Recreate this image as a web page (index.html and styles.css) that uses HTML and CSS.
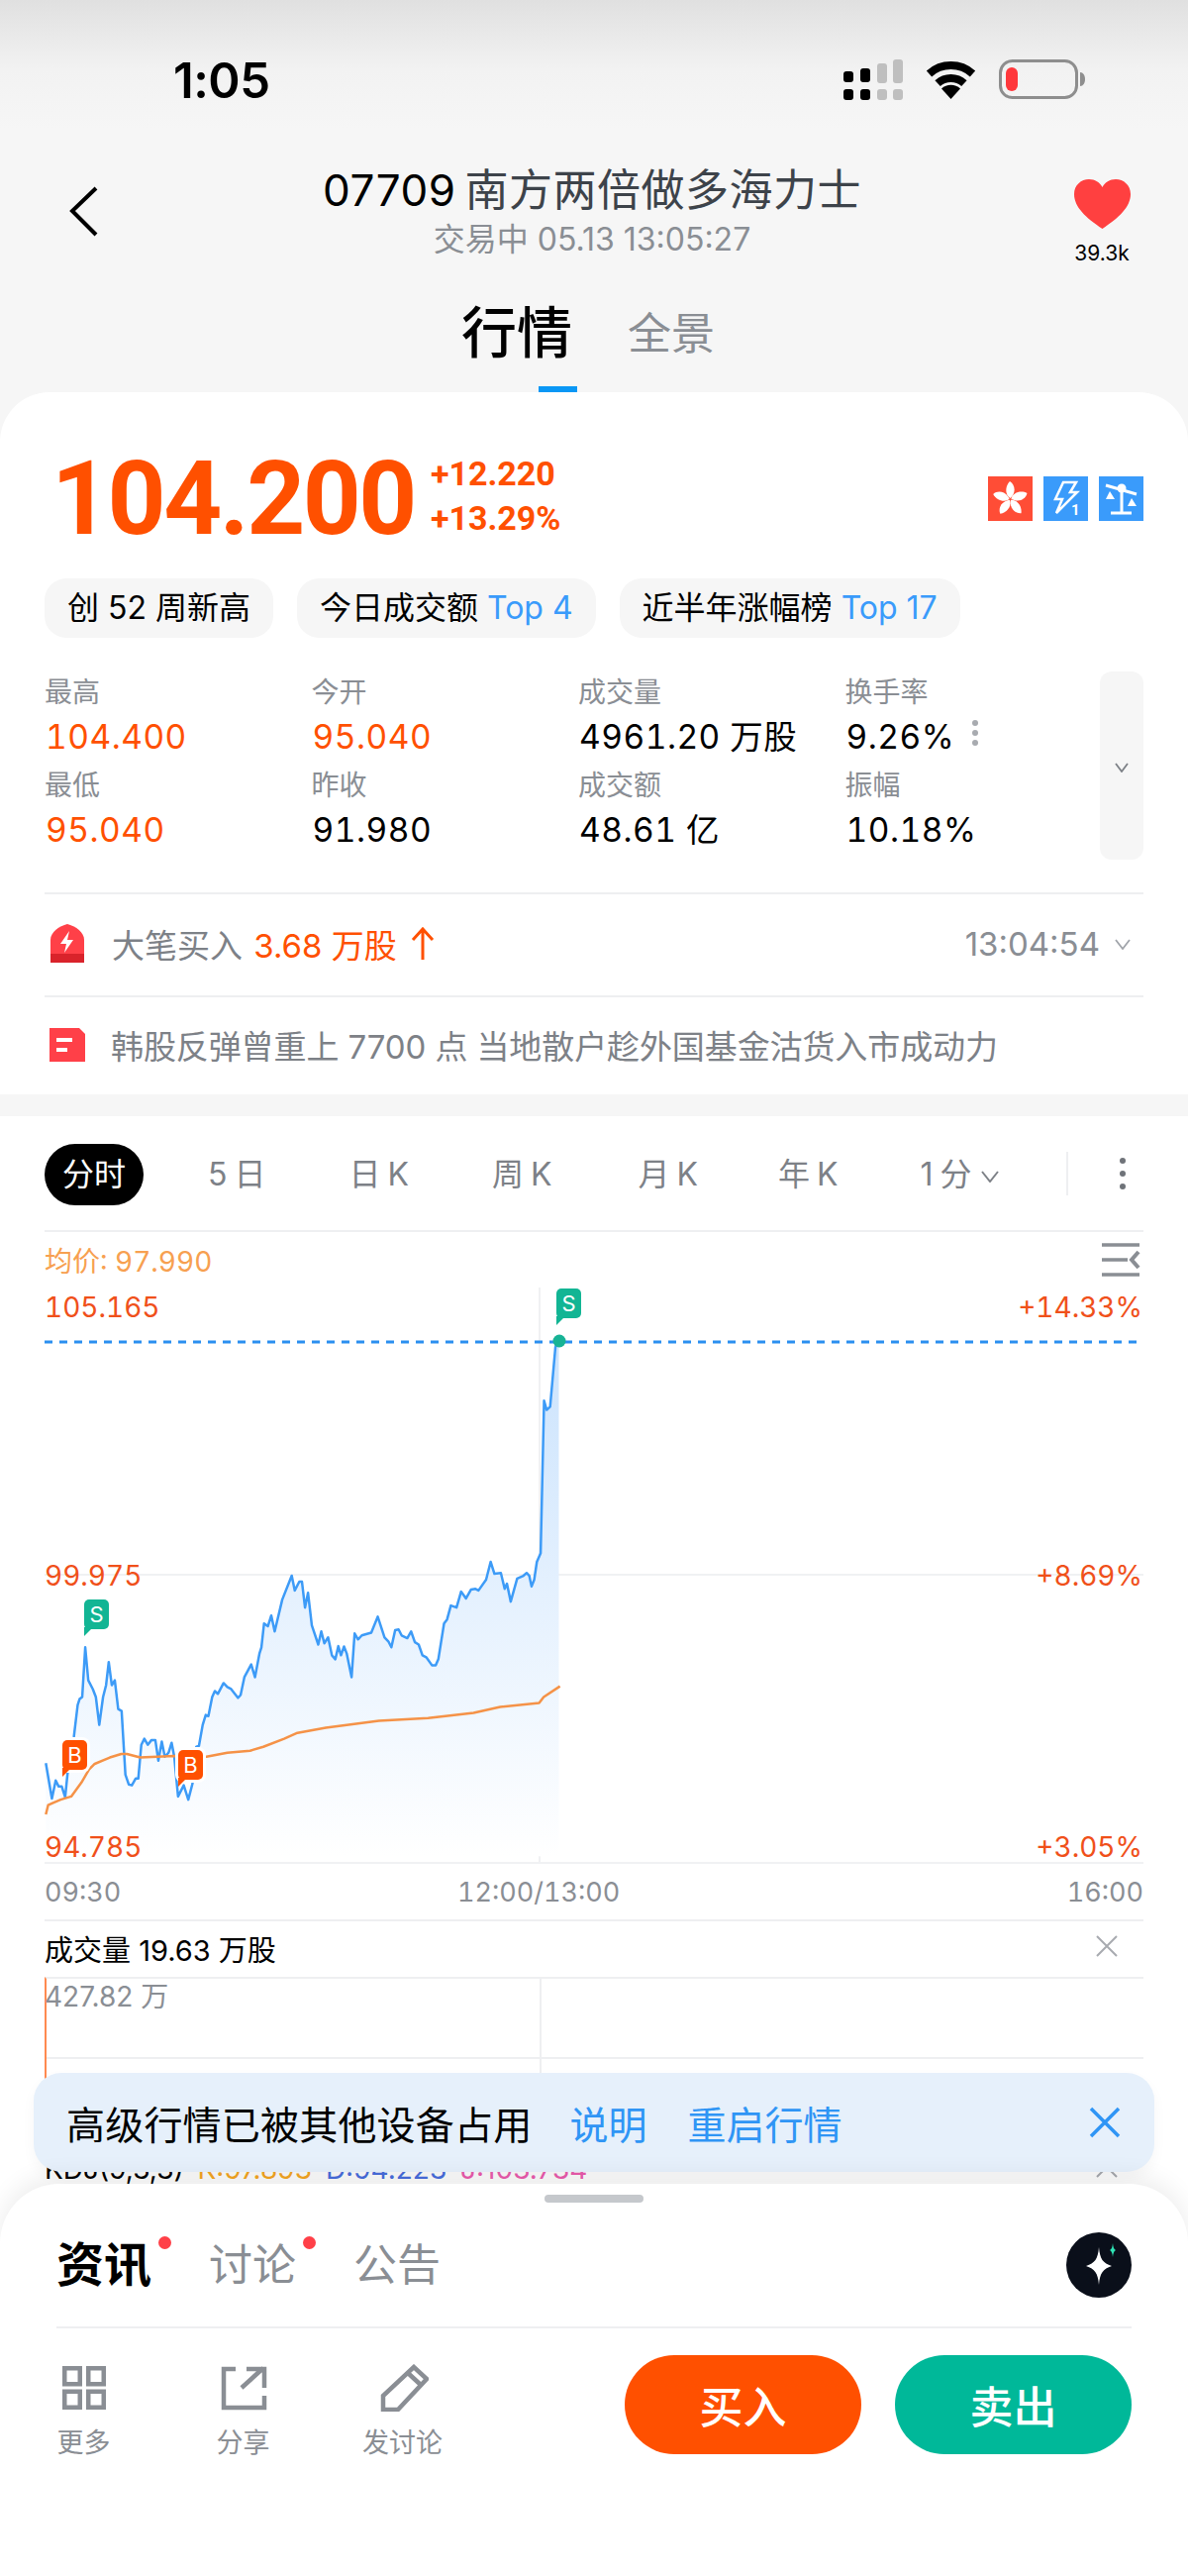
FILE: index.html
```html
<!DOCTYPE html>
<html lang="zh-CN">
  <head>
    <meta charset="utf-8">
    <title>07709 南方两倍做多海力士</title>
    <link rel="stylesheet" href="styles.css">
  </head>
  <body>
    <div class="screen">
      <div class="status">
        <span class="clock">1:05</span>
        <div class="status-icons">
          <svg class="signal" width="60" height="41" viewBox="0 0 60 41">
            <rect x="0" y="12" width="10" height="11" rx="3"/><rect x="0" y="30" width="10" height="11" rx="3"/>
            <rect x="17" y="9" width="10" height="14" rx="3"/><rect x="17" y="30" width="10" height="11" rx="3"/>
            <g fill="#bfbfbf">
              <rect x="34" y="4" width="10" height="20" rx="3"/><rect x="34" y="30" width="10" height="11" rx="3"/>
              <rect x="50" y="0" width="10" height="24" rx="3"/><rect x="50" y="30" width="10" height="11" rx="3"/>
            </g>
          </svg>
          <svg class="wifi" width="53" height="40" viewBox="0 0 53 40">
            <path d="M4.5 14.5A33 33 0 0 1 48.500 14.500M13.100 24.100A20 20 0 0 1 39.900 24.100" fill="none" stroke="#000" stroke-width="8"/>
            <path d="M26.500 40L17 29.500A14 14 0 0 1 36 29.500Z"/>
          </svg>
          <svg class="battery" width="88" height="40" viewBox="0 0 88 40">
            <rect x="1.500" y="1.500" width="77" height="37" rx="12" fill="none" stroke="#8e8e8e" stroke-width="3"/>
            <rect x="7" y="8" width="12" height="24" rx="6" fill="#ff383c"/>
            <path d="M82 13c3 0 5 3 5 7s-2 7-5 7z" fill="#8e8e8e"/>
          </svg>
        </div>
      </div>

      <header class="nav">
        <svg class="back" width="30" height="52" viewBox="0 0 30 52"><polyline points="27,3 3,26 27,50" fill="none" stroke="#000" stroke-width="4"/></svg>
        <div class="nav-title">
          <h1><span class="code">07709</span> 南方两倍做多海力士</h1>
          <p>交易中 05.13 13:05:27</p>
        </div>
        <div class="fav">
          <svg width="57" height="50" viewBox="0 0 57 50"><path d="M28.500 50C12 39 0 28 0 15 0 6 7 0 15 0c6 0 11 3 13.500 8C31 3 36 0 42 0c8 0 15 6 15 15 0 13-12 24-28.500 35z" fill="#ff4040"/></svg>
          <span>39.3k</span>
        </div>
      </header>

      <div class="page-tabs">
        <span class="page-tab active">行情</span>
        <span class="page-tab">全景</span>
      </div>

      <section class="quote">
        <div class="price-row">
          <div class="price">104.200</div>
          <div class="change">
            <span>+12.220</span>
            <span>+13.29%</span>
          </div>
          <div class="badges">
            <svg class="badge" width="45" height="45" viewBox="0 0 45 45">
              <rect width="45" height="45" fill="#ff4d36"/>
              <g fill="#fff">
                <path d="M22.500 22C17 19 17 10 22 5c5 3 7 11 .5 17z"/>
                <path d="M22.500 22C17 19 17 10 22 5c5 3 7 11 .5 17z" transform="rotate(72 22.500 23)"/>
                <path d="M22.500 22C17 19 17 10 22 5c5 3 7 11 .5 17z" transform="rotate(144 22.500 23)"/>
                <path d="M22.500 22C17 19 17 10 22 5c5 3 7 11 .5 17z" transform="rotate(216 22.500 23)"/>
                <path d="M22.500 22C17 19 17 10 22 5c5 3 7 11 .5 17z" transform="rotate(288 22.500 23)"/>
              </g>
            </svg>
            <svg class="badge" width="45" height="45" viewBox="0 0 45 45">
              <rect width="45" height="45" fill="#3a9bfb"/>
              <path d="M20 6H33L27 16H34L13 37L19 23H12Z" fill="none" stroke="#fff" stroke-width="2.500" stroke-linejoin="miter"/>
              <text x="28" y="39" class="badge-num">1</text>
            </svg>
            <svg class="badge" width="45" height="45" viewBox="0 0 45 45">
              <rect width="45" height="45" fill="#3a9bfb"/>
              <path d="M7 9L38 18M23 14V37M12 37H33" stroke="#fff" stroke-width="3" fill="none"/>
              <circle cx="23" cy="12" r="4.500" fill="#fff"/>
              <path d="M11 15L16 23H7ZM33 22L38 30H29Z" fill="#fff"/>
            </svg>
          </div>
        </div>

        <div class="chips">
          <span class="chip">创 52 周新高</span>
          <span class="chip">今日成交额 <em>Top 4</em></span>
          <span class="chip">近半年涨幅榜 <em>Top 17</em></span>
        </div>

        <div class="stats">
          <dl class="stat-grid">
            <div><dt>最高</dt><dd class="up">104.400</dd></div>
            <div><dt>今开</dt><dd class="up">95.040</dd></div>
            <div><dt>成交量</dt><dd>4961.20 万股</dd></div>
            <div><dt>换手率</dt><dd>9.26% <i class="more-dots"></i></dd></div>
            <div><dt>最低</dt><dd class="up">95.040</dd></div>
            <div><dt>昨收</dt><dd>91.980</dd></div>
            <div><dt>成交额</dt><dd>48.61 亿</dd></div>
            <div><dt>振幅</dt><dd>10.18%</dd></div>
          </dl>
          <div class="expand">
            <svg width="14" height="10" viewBox="0 0 14 10"><polyline points="1,1 7,9 13,1" fill="none" stroke="#7d8187" stroke-width="1.800"/></svg>
          </div>
        </div>

        <div class="info-row trade-row">
          <svg width="34" height="40" viewBox="0 0 34 40">
            <path d="M0 30V16C0 8 9 2 17 0c8 2 17 8 17 16v14z" fill="#ff4048"/>
            <rect y="30" width="34" height="9" fill="#d9232b"/>
            <path d="M19 7L10 20H16L14 29L23 16H17Z" fill="#fff"/>
          </svg>
          <span class="info-text">大笔买入 <b>3.68 万股</b></span>
          <svg class="arrow-up" width="24" height="34" viewBox="0 0 24 34"><path d="M12 33V2M2 13L12 2L22 13" fill="none" stroke="#ff5000" stroke-width="3"/></svg>
          <span class="trade-time">13:04:54</span>
          <svg width="16" height="11" viewBox="0 0 16 11"><polyline points="1,1 8,10 15,1" fill="none" stroke="#a0a4aa" stroke-width="1.800"/></svg>
        </div>

        <div class="info-row news-row">
          <svg width="36" height="34" viewBox="0 0 36 34">
            <path d="M0 0H30L36 6V34H0Z" fill="#ff4048"/>
            <rect x="7" y="10" width="16" height="4" fill="#fff"/>
            <rect x="7" y="20" width="11" height="4" fill="#fff"/>
          </svg>
          <span class="info-text">韩股反弹曾重上 7700 点 当地散户趁外国基金沽货入市成动力</span>
        </div>
      </section>

      <section class="chart-panel">
        <div class="period-bar">
          <span class="period active">分时</span>
          <span class="period p5">5 日</span>
          <span class="period pd">日 K</span>
          <span class="period pw">周 K</span>
          <span class="period pm">月 K</span>
          <span class="period py">年 K</span>
          <span class="period pmin">1 分
            <svg width="18" height="12" viewBox="0 0 18 12"><polyline points="1,1 9,11 17,1" fill="none" stroke="#7d8187" stroke-width="2"/></svg>
          </span>
          <span class="period-more"><i class="more-dots big"></i></span>
        </div>

        <div class="avg-row">
          <span>均价: 97.990</span>
          <svg width="40" height="34" viewBox="0 0 40 34"><path d="M1 2H39M1 17H27M1 32H39" fill="none" stroke="#8a8e94" stroke-width="3.500"/><path d="M38 9L31 17L38 25" fill="none" stroke="#8a8e94" stroke-width="4"/></svg>
        </div>

        <div class="plot">
          <svg class="plot-svg" width="1200" height="582" viewBox="0 0 1200 582">
            <defs>
              <linearGradient id="area" gradientUnits="userSpaceOnUse" x1="0" y1="235" x2="0" y2="1530">
                <stop offset="0" stop-color="#cbe3fd"/>
                <stop offset="1" stop-color="#ffffff"/>
              </linearGradient>
            </defs>
            <path d="M45 290H1155M45 581H1155M545 0V582" stroke="#f0f1f3" stroke-width="2" fill="none"/>
            <g transform="translate(0 -40.300) scale(.3827 .4016)">
              <polygon fill="url(#area)" points="121,1296 137,1385 147,1340 155,1355 163,1355 172,1382 178,1325 195,1230 205,1150 210,1135 217,1130 225,1005 233,1088 245,1110 253,1130 262,1200 272,1130 280,1100 287,1042 295,1100 303,1088 312,1160 321,1165 331,1325 340,1350 348,1352 358,1335 365,1335 373,1250 381,1235 390,1250 400,1238 410,1238 418,1290 427,1242 435,1280 445,1270 453,1245 460,1280 470,1380 485,1352 497,1388 508,1348 518,1255 525,1253 535,1200 543,1175 550,1178 560,1130 567,1115 575,1122 590,1095 600,1105 610,1110 628,1132 635,1125 645,1080 663,1048 673,1080 685,1020 690,1005 697,945 707,952 716,925 725,965 745,885 770,825 778,862 790,840 797,840 805,905 813,868 823,950 840,998 848,965 856,995 866,980 876,1025 885,1035 893,1002 900,1025 908,1003 915,1020 928,1080 936,970 945,985 955,975 980,968 997,928 1015,980 1025,990 1033,1005 1043,962 1052,960 1060,975 1075,982 1085,965 1095,992 1105,998 1115,1025 1125,1030 1140,1050 1150,1050 1157,1035 1172,945 1180,935 1190,900 1205,905 1217,865 1230,882 1243,860 1255,858 1263,862 1283,835 1295,790 1305,820 1322,818 1332,858 1338,845 1348,890 1365,832 1380,826 1390,818 1397,825 1403,852 1410,835 1417,790 1427,768 1436,385 1443,408 1452,400 1466,250 1475,235 1475,1530 121,1530"/>
              <polyline class="line-price" points="121,1296 137,1385 147,1340 155,1355 163,1355 172,1382 178,1325 195,1230 205,1150 210,1135 217,1130 225,1005 233,1088 245,1110 253,1130 262,1200 272,1130 280,1100 287,1042 295,1100 303,1088 312,1160 321,1165 331,1325 340,1350 348,1352 358,1335 365,1335 373,1250 381,1235 390,1250 400,1238 410,1238 418,1290 427,1242 435,1280 445,1270 453,1245 460,1280 470,1380 485,1352 497,1388 508,1348 518,1255 525,1253 535,1200 543,1175 550,1178 560,1130 567,1115 575,1122 590,1095 600,1105 610,1110 628,1132 635,1125 645,1080 663,1048 673,1080 685,1020 690,1005 697,945 707,952 716,925 725,965 745,885 770,825 778,862 790,840 797,840 805,905 813,868 823,950 840,998 848,965 856,995 866,980 876,1025 885,1035 893,1002 900,1025 908,1003 915,1020 928,1080 936,970 945,985 955,975 980,968 997,928 1015,980 1025,990 1033,1005 1043,962 1052,960 1060,975 1075,982 1085,965 1095,992 1105,998 1115,1025 1125,1030 1140,1050 1150,1050 1157,1035 1172,945 1180,935 1190,900 1205,905 1217,865 1230,882 1243,860 1255,858 1263,862 1283,835 1295,790 1305,820 1322,818 1332,858 1338,845 1348,890 1365,832 1380,826 1390,818 1397,825 1403,852 1410,835 1417,790 1427,768 1436,385 1443,408 1452,400 1466,250 1475,235"/>
              <polyline class="line-avg" points="121,1425 127,1402 140,1396 160,1388 188,1380 215,1345 235,1312 250,1298 290,1282 320,1273 335,1273 370,1282 460,1278 545,1280 600,1270 660,1265 695,1255 750,1235 785,1220 860,1207 940,1197 1000,1190 1130,1183 1250,1170 1320,1155 1423,1145 1435,1130 1478,1103"/>
            </g>
            <line x1="45" x2="1155" y1="55" y2="55" stroke="#2b8ff0" stroke-width="3" stroke-dasharray="8 7"/>
            <circle cx="565" cy="54" r="6.500" fill="#17b395"/>
          </svg>
          <span class="axis left top-a">105.165</span>
          <span class="axis right top-a">+14.33%</span>
          <span class="axis left mid-a">99.975</span>
          <span class="axis right mid-a">+8.69%</span>
          <span class="axis left low-a">94.785</span>
          <span class="axis right low-a">+3.05%</span>
          <span class="mark sell s1">S</span>
          <span class="mark sell s2">S</span>
          <span class="mark buy b1">B</span>
          <span class="mark buy b2">B</span>
        </div>

        <div class="time-axis"><span class="t-open">09:30</span><span>12:00/13:00</span><span class="t-close">16:00</span></div>

        <div class="ind-head"><span>成交量 19.63 万股</span><svg width="24" height="24" viewBox="0 0 24 24"><path d="M2 2L22 22M22 2L2 22" stroke="#a8abb0" stroke-width="2"/></svg></div>
        <div class="vol-plot"><span>427.82 万</span></div>
        <div class="ind-head kdj">
          <span>KDJ(9,3,3) <em class="k">K:97.893</em> <em class="d">D:94.223</em> <em class="j">J:103.734</em></span>
          <svg width="24" height="24" viewBox="0 0 24 24"><path d="M2 2L22 22M22 2L2 22" stroke="#a8abb0" stroke-width="2"/></svg>
        </div>
      </section>

      <div class="notice">
        <span class="notice-text">高级行情已被其他设备占用</span>
        <span class="notice-link">说明</span>
        <span class="notice-link">重启行情</span>
        <svg width="32" height="32" viewBox="0 0 32 32"><path d="M2 2L30 30M30 2L2 30" stroke="#2f95f5" stroke-width="3.500"/></svg>
      </div>

      <div class="sheet">
        <div class="handle"></div>
        <div class="sheet-tabs">
          <span class="sheet-tab active">资讯<i></i></span>
          <span class="sheet-tab">讨论<i></i></span>
          <span class="sheet-tab">公告</span>
          <span class="ai">
            <svg width="66" height="66" viewBox="0 0 66 66">
              <circle cx="33" cy="33" r="33" fill="#0a0f1a"/>
              <path d="M33 15C34 27 37 31 46 34 37 37 34 41 33 53 32 41 29 37 20 34 29 31 32 27 33 15Z" fill="#fff"/>
              <path d="M47 11C47.500 15 48 17 50 18 48 19 47.500 21 47 25 46.500 21 46 19 44 18 46 17 46.500 15 47 11Z" fill="#2fe3b5"/>
            </svg>
          </span>
        </div>
        <div class="actions">
          <div class="action-group">
            <div class="action">
              <svg width="48" height="48" viewBox="0 0 48 48" fill="none" stroke="#8a8e94" stroke-width="4.500">
                <rect x="4.250" y="4.250" width="15.500" height="16"/><rect x="28.250" y="4.250" width="15.500" height="16"/>
                <rect x="4.250" y="27.750" width="15.500" height="16"/><rect x="28.250" y="27.750" width="15.500" height="16"/>
              </svg>
              <span>更多</span>
            </div>
            <div class="action">
              <svg width="48" height="48" viewBox="0 0 48 48" fill="none" stroke="#8a8e94" stroke-width="4.500">
                <path d="M16 5H4V44H45V32M22 24L44 4M27 5H45V24"/>
              </svg>
              <span>分享</span>
            </div>
            <div class="action">
              <svg width="52" height="48" viewBox="0 0 52 48" fill="none" stroke="#8a8e94" stroke-width="4.500">
                <path d="M6 46V32L37 3L50 15L21 46ZM31 9L44 21"/>
              </svg>
              <span>发讨论</span>
            </div>
          </div>
          <button class="trade buy-btn">买入</button>
          <button class="trade sell-btn">卖出</button>
        </div>
      </div>
    </div>
  </body>
</html>
```

FILE: styles.css
```css
* {
  box-sizing: border-box
}

body {
  margin: 0;
  padding: 0;
  font-family: Inter, 'Noto Sans CJK SC', sans-serif;
  color: #000
}

em, i {
  font-style: normal
}

.screen {
  position: relative;
  z-index: 0;
  width: 1200px;
  height: 2601px;
  overflow: hidden;
  background: linear-gradient(#e0e0e0 0, #f2f2f2 70px, #f6f6f6 130px)
}

/* status bar */
.status {
  height: 160px;
  padding: 58px 103px 0 175px;
  display: flex;
  justify-content: space-between;
  align-items: flex-start
}

.clock {
  font-size: 49px;
  line-height: 47px;
  font-weight: 600;
  letter-spacing: -.5px
}

.status-icons {
  display: flex;
  align-items: flex-start;
  gap: 22px;
  padding-top: 2px
}

/* nav */
.nav {
  height: 110px;
  display: grid;
  grid-template-columns: 200px 1fr 200px;
  align-items: start
}

.back {
  margin: 27px 0 0 70px
}

.nav-title {
  text-align: center;
  padding-right: 4px
}

.nav-title h1 {
  margin: 6px 0 0;
  font-size: 44px;
  line-height: 52px;
  font-weight: 400;
  letter-spacing: .5px;
  word-spacing: -4px;
  color: #3d434a
}

.nav-title .code {
  color: #000
}

.nav-title p {
  margin: 4px 0 0;
  font-size: 32px;
  line-height: 40px;
  color: #8a8e94
}

.fav {
  display: flex;
  flex-direction: column;
  align-items: center;
  width: 60px;
  margin: 21px 0 0 83px
}

.fav span {
  font-size: 21px;
  line-height: 24px;
  margin-top: 13px
}

.page-tabs {
  height: 126px;
  display: flex;
  gap: 56px;
  padding: 36px 0 0 466px
}

.page-tab {
  position: relative;
  font-size: 44px;
  line-height: 60px;
  margin-top: 1px;
  color: #8a8e94
}

.page-tab.active {
  font-size: 56px;
  margin-top: 0;
  font-weight: 500;
  color: #000
}

.page-tab.active::after {
  content: "";
  position: absolute;
  left: 78px;
  bottom: -4px;
  width: 39px;
  height: 10px;
  background: #0a97f5;
  z-index: -1
}

/* quote card */
.quote {
  background: #fff;
  border-radius: 50px 50px 0 0;
  padding: 60px 45px 0;
  height: 709px;
  position: relative
}

.price-row {
  display: flex;
  align-items: center;
  height: 95px;
  margin-bottom: 33px
}

.price {
  font-family: Roboto, sans-serif;
  font-size: 103px;
  line-height: 95px;
  font-weight: 700;
  color: #ff5000;
  margin-left: 7px;
  letter-spacing: -2.500px
}

.change {
  display: flex;
  flex-direction: column;
  gap: 12px;
  margin: -6px 0 0 16px;
  font-family: Roboto, sans-serif;
  font-size: 34px;
  line-height: 33px;
  font-weight: 700;
  color: #ff5000
}

.badges {
  margin-left: auto;
  display: flex;
  gap: 11px;
  height: 45px
}

.badge {
  display: block
}

.badge-num {
  font-family: Roboto, sans-serif;
  font-size: 15px;
  font-weight: 700;
  fill: #fff
}

.chips {
  display: flex;
  gap: 24px
}

.chip {
  height: 60px;
  line-height: 60px;
  padding: 0 23px;
  background: #f6f6f6;
  border-radius: 22px;
  font-size: 32px;
  white-space: nowrap
}

.chip em {
  color: #3a9bfb
}

.stats {
  margin-top: 34px;
  height: 190px;
  display: flex
}

.stat-grid {
  margin: 0;
  flex: 1;
  display: grid;
  grid-template-columns: repeat(3, 269.500px) 1fr;
  grid-auto-rows: 94px
}

.stat-grid dt {
  font-size: 28px;
  line-height: 36px;
  color: #8a8e94;
  margin-top: 3px
}

.stat-grid dd {
  margin: 6px 0 0 1px;
  font-size: 33.500px;
  line-height: 42px;
  letter-spacing: .5px;
  font-variant-numeric: tabular-nums;
  white-space: nowrap
}

.stat-grid dd.up {
  color: #ff5000
}

.more-dots {
  display: inline-block;
  width: 6px;
  height: 6px;
  margin: 0 0 14px 8px;
  border-radius: 50%;
  background: #a8abb0;
  box-shadow: 0 -10px 0 #a8abb0, 0 10px 0 #a8abb0;
  vertical-align: middle
}

.more-dots.big {
  margin: 0;
  background: #6f7379;
  box-shadow: 0 -13px 0 #6f7379, 0 13px 0 #6f7379
}

.expand {
  flex: none;
  width: 44px;
  background: #f6f6f6;
  border-radius: 12px;
  display: flex;
  align-items: center;
  justify-content: center;
  padding-top: 4px
}

.info-row {
  display: flex;
  align-items: center;
  border-top: 2px solid #eeeff1
}

.trade-row {
  margin-top: 33px;
  height: 104px;
  padding: 0 13px 2px 6px
}

.news-row {
  height: 100px;
  padding: 0 0 2px 5px
}

.info-text {
  margin-left: 28px;
  font-size: 33px;
  color: #7d8187;
  white-space: nowrap
}

.news-row .info-text {
  margin-left: 26px;
  letter-spacing: -.1px
}

.info-text b {
  font-weight: 400;
  color: #ff5000;
  margin-left: 2px
}

.arrow-up {
  margin-left: 14px
}

.trade-time {
  margin-left: auto;
  margin-right: 15px;
  font-size: 33px;
  color: #8a8e94
}

/* chart */
.chart-panel {
  position: absolute;
  top: 1127px;
  left: 0;
  right: 0;
  bottom: 0;
  background: #fff
}

.period-bar {
  position: relative;
  height: 117px;
  margin: 0 45px;
  padding-top: 28px;
  display: flex;
  border-bottom: 2px solid #eeeff1
}

.period {
  font-size: 32px;
  line-height: 62px;
  height: 62px;
  color: #7d8187;
  word-spacing: -2px;
  white-space: nowrap
}

.period.active {
  width: 100px;
  border-radius: 31px;
  background: #000;
  color: #fff;
  text-align: center
}

.period.p5 { margin-left: 65px; }
.period.pd { margin-left: 84px; }
.period.pw { margin-left: 84px; }
.period.pm { margin-left: 87px; }
.period.py { margin-left: 81px; }
.period.pmin { margin-left: 83px; }

.pmin svg {
  margin-left: 2px;
  vertical-align: middle
}

.period-more {
  margin-left: auto;
  flex: none;
  width: 79px;
  height: 44px;
  margin-top: 8px;
  border-left: 2px solid #eeeff1;
  display: flex;
  align-items: center;
  justify-content: center;
  padding-left: 32px;
  margin-right: -1px
}

.avg-row {
  height: 56px;
  margin: 0 45px;
  display: flex;
  align-items: center;
  justify-content: space-between;
  font-size: 28px;
  font-variant-numeric: tabular-nums;
  color: #f7a050;
  padding-right: 3px
}

.plot {
  position: relative;
  height: 582px
}

.plot-svg {
  display: block
}

.plot-svg polyline {
  fill: none;
  stroke-linejoin: round;
  vector-effect: non-scaling-stroke
}

.line-price {
  stroke: #3d9bf7;
  stroke-width: 2.500
}

.line-avg {
  stroke: #f59247;
  stroke-width: 2.500
}

.axis {
  position: absolute;
  font-size: 28px;
  line-height: 34px;
  font-variant-numeric: tabular-nums;
  color: #f0501a
}

.axis.left { left: 45px; }
.axis.right { right: 46px; }
.axis.top-a { top: 3px; }
.axis.mid-a { top: 274px; }
.axis.low-a { top: 548px; }

.mark {
  position: absolute;
  width: 25px;
  height: 30px;
  border-radius: 5px;
  font-size: 22px;
  line-height: 30px;
  text-align: center;
  color: #fff
}

.mark::after {
  content: "";
  position: absolute;
  left: 0;
  top: 28px;
  border-top: 9px solid transparent;
  border-right: 9px solid transparent;
  border-top-color: inherit
}

.mark.sell {
  background: #12b594;
  border-color: #12b594
}

.mark.buy {
  background: #ff5000;
  border-color: #ff5000;
  box-shadow: 0 0 0 3px #fff
}

.s1 { left: 85px; top: 315px; }
.s2 { left: 562px; top: 1px; }
.b1 { left: 63px; top: 457px; }
.b2 { left: 180px; top: 467px; }

.time-axis {
  height: 56px;
  margin: 0 45px;
  display: flex;
  align-items: center;
  font-size: 27px;
  font-variant-numeric: tabular-nums;
  color: #8a8e94
}

.t-open {
  width: 417px
}

.t-close {
  margin-left: auto
}

.ind-head {
  height: 58px;
  margin: 0 45px;
  padding: 0 25px 2px 0;
  display: flex;
  justify-content: space-between;
  align-items: center;
  border-top: 2px solid #eeeff1;
  font-size: 29px
}

.ind-head svg {
  margin-bottom: 4px
}

.vol-plot {
  position: relative;
  height: 166px;
  margin: 0 45px;
  border-top: 2px solid #eeeff1;
  border-left: 2px solid #ff8a50;
  font-size: 28px;
  line-height: 34px;
  color: #8a8e94;
  background:
    linear-gradient(#eeeff1, #eeeff1) 0 79px / 100% 2px no-repeat,
    linear-gradient(#eeeff1, #eeeff1) 498px 0 / 2px 100% no-repeat
}

.vol-plot span {
  display: block;
  margin: 1px 0 0 -2px
}

.kdj {
  font-size: 28px;
  border-top: 0
}

.kdj em.k { color: #f7a823; margin-left: 6px; }
.kdj em.d { color: #4a6fe0; margin-left: 6px; }
.kdj em.j { color: #ee5db0; margin-left: 6px; }

/* notice banner */
.notice {
  position: absolute;
  left: 34px;
  top: 2093px;
  width: 1132px;
  height: 100px;
  padding: 0 34px 0 33px;
  display: flex;
  align-items: center;
  background: #e6f0fb;
  border-radius: 28px;
  box-shadow: 0 6px 14px rgba(0, 0, 0, .04);
  font-size: 39px
}

.notice-text {
  letter-spacing: .2px
}

.notice-link {
  margin-left: 41px
}

.notice-text + .notice-link {
  margin-left: 38px
}

.notice-link {
  color: #2f95f5
}

.notice svg {
  margin-left: auto
}

/* bottom sheet */
.sheet {
  position: absolute;
  left: 0;
  right: 0;
  top: 2205px;
  bottom: 0;
  background: #fff;
  border-radius: 60px 60px 0 0;
  box-shadow: 0 -8px 24px rgba(0, 0, 0, .07);
  padding: 0 57px
}

.handle {
  width: 100px;
  height: 8px;
  margin: 11px auto 0;
  border-radius: 4px;
  background: #c5c8cc
}

.sheet-tabs {
  height: 127px;
  padding-top: 30px;
  display: flex;
  align-items: flex-start;
  border-bottom: 2px solid #eeeff1
}

.sheet-tab {
  position: relative;
  font-size: 44px;
  line-height: 66px;
  margin-right: 58px;
  color: #8a8e94
}

.sheet-tab.active {
  font-size: 48px;
  font-weight: 700;
  color: #000
}

.sheet-tab i {
  position: absolute;
  right: -20px;
  top: 4px;
  width: 13px;
  height: 13px;
  border-radius: 50%;
  background: #ff4048
}

.ai {
  margin-left: auto;
  height: 66px
}

.ai svg {
  display: block
}

.actions {
  display: flex;
  align-items: flex-start;
  margin-top: 27px
}

.action-group {
  display: flex;
  margin: 9px 0 0 -53px
}

.action {
  width: 161px;
  display: flex;
  flex-direction: column;
  align-items: center;
  font-size: 27px;
  color: #8a8e94;
  white-space: nowrap
}

.action svg {
  display: block
}

.action span {
  margin-top: 15px;
  line-height: 34px
}

.trade {
  width: 239px;
  height: 100px;
  border: 0;
  border-radius: 50px;
  font: 500 44px Inter, 'Noto Sans CJK SC', sans-serif;
  color: #fff
}

.buy-btn {
  margin-left: auto;
  background: #ff5000
}

.sell-btn {
  margin-left: 34px;
  background: #00b899
}
```
